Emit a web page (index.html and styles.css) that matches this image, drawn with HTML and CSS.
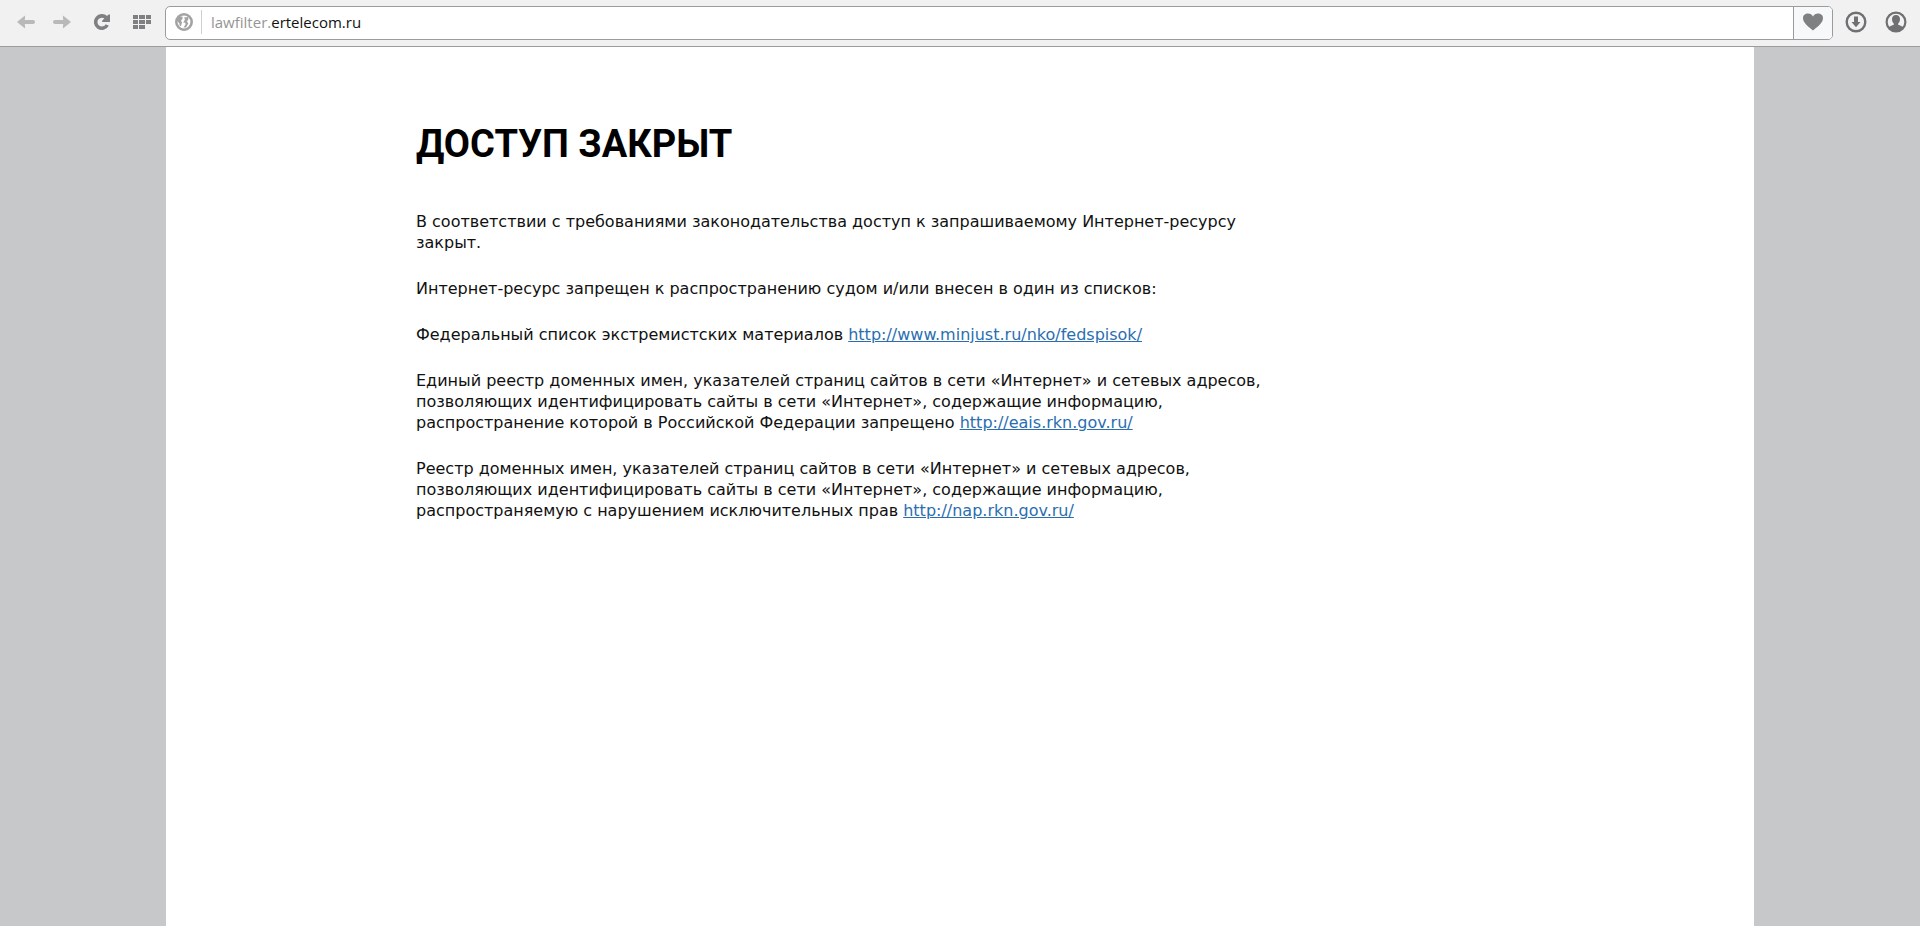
FILE: index.html
```html
<!DOCTYPE html>
<html lang="ru">
<head>
  <meta charset="utf-8">
  <meta name="viewport" content="width=device-width, initial-scale=1">
  <title>lawfilter.ertelecom.ru</title>
  <link rel="stylesheet" href="styles.css">
</head>
<body>

<header class="toolbar">
  <button class="tool-btn nav-btn" type="button" aria-label="Назад">
    <svg width="18" height="14" viewBox="0 0 18 14"><path d="M16 7H5" /><path class="head" d="M0 7 8 .500V4L6.500 7 8 10V13.500Z" /></svg>
  </button>
  <button class="tool-btn nav-btn" type="button" aria-label="Вперёд">
    <svg width="18" height="14" viewBox="0 0 18 14"><path d="M2 7H13" /><path class="head" d="M18 7 10 .500V4L11.500 7 10 10V13.500Z" /></svg>
  </button>
  <button class="tool-btn reload-btn" type="button" aria-label="Обновить">
    <svg width="18" height="18" viewBox="0 0 18 18">
      <path d="M14.300 12A6.200 6.200 0 1 1 13.200 4.600" fill="none" stroke="#7f8082" stroke-width="3.600" />
      <path d="M17 1.500V9H9.200V7.600L15.600 1.500Z" fill="#7f8082" />
    </svg>
  </button>
  <button class="tool-btn" type="button" aria-label="Экспресс-панель">
    <svg width="18" height="14" viewBox="0 0 18 14" fill="#7f8082">
      <path d="M0 0h5v4H0zM6 0h6v4H6zM13 0h5v4h-5zM0 5h5v4H0zM6 5h6v4H6zM13 5h5v4h-5zM0 10h5v4H0zM6 10h6v4H6z" />
    </svg>
  </button>

  <form class="address-bar">
    <button class="site-btn" type="button" aria-label="Сведения о сайте">
      <svg width="18" height="18" viewBox="0 0 18 18">
        <circle cx="9" cy="9" r="7.700" fill="#fff" stroke="#a3a3a3" stroke-width="2.600" />
        <path d="M3 4 7.500 3.500 7.500 6 6 7.500 7 9.500 6 13 4.800 13 4.200 10 2 8ZM9 4.500 13 4 13.500 6 12 8.500 13.300 10.500 11 14.500 8.500 14.500 10.500 11.500 10.300 9.800 8.200 9.500 10 6.500Z" fill="#a3a3a3" />
      </svg>
    </button>
    <label class="subdomain" for="address">lawfilter.</label>
    <input class="address" id="address" type="text" value="ertelecom.ru">
    <button class="heart-btn" type="button" aria-label="В закладки">
      <svg width="20" height="18" viewBox="0 0 20 18">
        <path d="M10 17.500C7.500 15 0 10.500 0 5.200 0 2 2.300.500 5 .500 7.300.500 9 1.600 10 3.500 11 1.600 12.700.500 15 .500 17.700.500 20 2 20 5.200 20 10.500 12.500 15 10 17.500Z" fill="#7f8082" />
      </svg>
    </button>
  </form>

  <button class="tool-btn" type="button" aria-label="Загрузки">
    <svg width="22" height="22" viewBox="0 0 22 22">
      <circle cx="11" cy="11" r="9.300" fill="none" stroke="#6f7072" stroke-width="2.400" />
      <path d="M9 5.500h4V11h2.500L11 16.200 6.500 11H9Z" fill="#6f7072" />
    </svg>
  </button>
  <button class="tool-btn" type="button" aria-label="Профиль">
    <svg width="22" height="22" viewBox="0 0 22 22">
      <circle cx="11" cy="11" r="9.400" fill="none" stroke="#6f7072" stroke-width="2.200" />
      <path d="M11 4c2.700 0 4 1.700 4 4.200 0 2-.800 3.300-1.800 4.200v1.400c1.500.600 3.600 1 5.300 2.700A9.500 9.500 0 0 1 3.500 16.500c1.700-1.700 3.800-2.100 5.300-2.700v-1.400C7.800 11.500 7 10.200 7 8.200 7 5.700 8.300 4 11 4Z" fill="#6f7072" />
    </svg>
  </button>
</header>

<main class="page">
  <div class="content">
    <h1>ДОСТУП ЗАКРЫТ</h1>
    <p>В соответствии с требованиями законодательства доступ к запрашиваемому Интернет-ресурсу закрыт.</p>
    <p>Интернет-ресурс запрещен к распространению судом и/или внесен в один из списков:</p>
    <p>Федеральный список экстремистских материалов <a href="http://www.minjust.ru/nko/fedspisok/">http://www.minjust.ru/nko/fedspisok/</a></p>
    <p>Единый реестр доменных имен, указателей страниц сайтов в сети «Интернет» и сетевых адресов, позволяющих идентифицировать сайты в сети «Интернет», содержащие информацию, распространение которой в Российской Федерации запрещено <a href="http://eais.rkn.gov.ru/">http://eais.rkn.gov.ru/</a></p>
    <p>Реестр доменных имен, указателей страниц сайтов в сети «Интернет» и сетевых адресов, позволяющих идентифицировать сайты в сети «Интернет», содержащие информацию, распространяемую с нарушением исключительных прав <a href="http://nap.rkn.gov.ru/">http://nap.rkn.gov.ru/</a></p>
  </div>
</main>

</body>
</html>
```

FILE: styles.css
```css
* {
  box-sizing: border-box;
}

body {
  margin: 0;
  min-height: 100vh;
  display: flex;
  flex-direction: column;
  background-color: #c7c8ca;
  color: #111;
  font-family: Verdana, "DejaVu Sans", sans-serif;
  font-size: 16px;
  line-height: 21px;
}

/* Browser toolbar */
.toolbar {
  display: flex;
  align-items: center;
  height: 47px;
  padding: 0 4px 0 8px;
  background-color: #f1f1f1;
  border-bottom: 1px solid #9b9c9e;
}

button {
  display: flex;
  align-items: center;
  justify-content: center;
  padding: 0;
  border: none;
  background: none;
  cursor: pointer;
}

.tool-btn {
  width: 40px;
  height: 34px;
  padding-bottom: 2px;
}

.nav-btn {
  width: 36px;
}

.nav-btn path {
  fill: none;
  stroke: #b9b9b9;
  stroke-width: 4;
  stroke-linecap: round;
}

.nav-btn .head {
  fill: #b9b9b9;
  stroke: none;
}

.reload-btn {
  margin-left: 2px;
}

.address-bar {
  flex: 1;
  display: flex;
  align-items: center;
  height: 34px;
  margin: 0 3px;
  padding-bottom: 2px;
  background-color: #fff;
  border: 1px solid #999b9d;
  border-radius: 5px;
  overflow: hidden;
  font-family: "Segoe UI", "Open Sans", sans-serif;
  font-size: 15px;
}

.site-btn {
  width: 36px;
  height: 24px;
  border-right: 1px solid #cfcfcf;
}

.subdomain {
  padding-left: 9px;
  color: #959595;
}

.address {
  flex: 1;
  min-width: 0;
  padding: 0;
  border: none;
  outline: none;
  background: none;
  color: #111;
  font: inherit;
}

.heart-btn {
  align-self: flex-start;
  width: 39px;
  height: 32px;
  padding-bottom: 2px;
  background-color: #f6f8fa;
  border-left: 1px solid #999b9d;
}

/* Blocked page */
.page {
  flex: 1;
  margin: 0 166px;
  padding: 74px 250px 0;
  background-color: #fff;
}

.content {
  max-width: 860px;
}

h1 {
  margin: 0 0 44px;
  color: #000;
  font-family: Roboto, sans-serif;
  font-size: 38px;
  font-weight: bold;
  line-height: 46px;
}

p {
  margin: 0 0 25px;
}

a {
  color: #2a6eb0;
}
```
